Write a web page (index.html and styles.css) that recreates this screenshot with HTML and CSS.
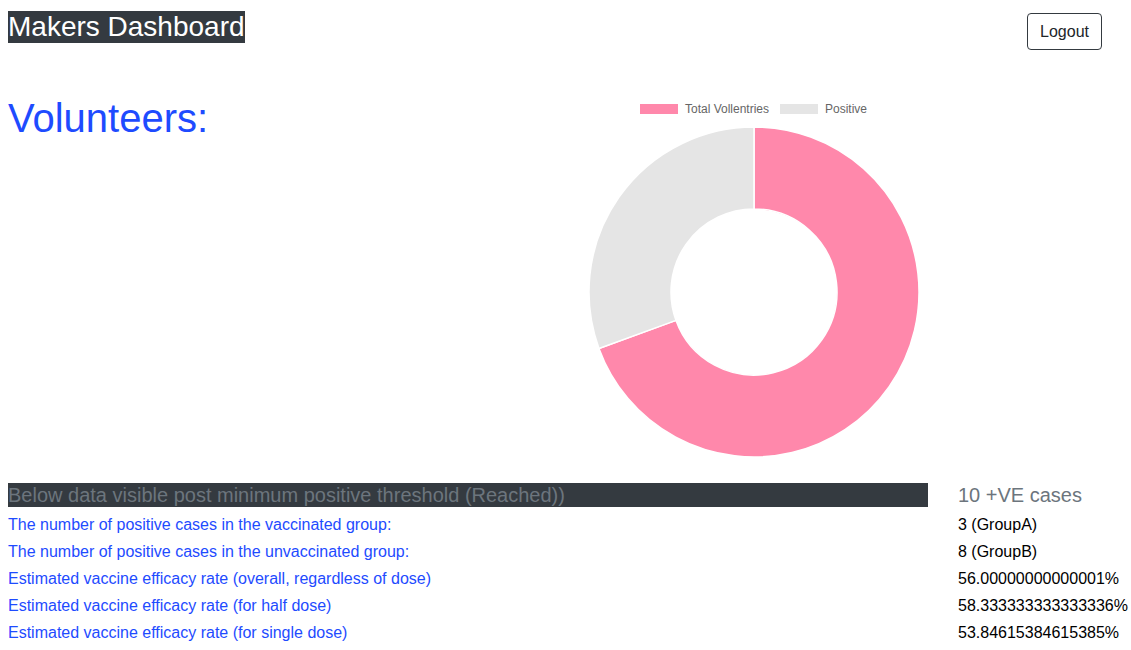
FILE: index.html
```html
<!DOCTYPE html>
<html lang="en">
<head>
<meta charset="utf-8">
<title>Makers Dashboard</title>
<link rel="stylesheet" href="styles.css">
</head>
<body>
<header class="topbar">
  <h3 class="brand">Makers Dashboard</h3>
  <button class="logout">Logout</button>
</header>

<section class="overview">
  <div class="left-col">
    <h1 class="volunteers">Volunteers:</h1>
  </div>
  <div class="chart-col">
    <div class="legend">
      <span class="legend-item"><span class="swatch swatch-pink"></span>Total Vollentries</span>
      <span class="legend-item"><span class="swatch swatch-grey"></span>Positive</span>
    </div>
    <svg class="donut" width="332" height="332" viewBox="0 0 332 332">
      <path class="seg-pink" d="M166,1 A165,165 0 1 1 10.95,222.43 L88.0,194.39 A83,83 0 1 0 166,83 Z"/>
      <path class="seg-grey" d="M10.95,222.43 A165,165 0 0 1 166,1 L166,83 A83,83 0 0 0 88.0,194.39 Z"/>
    </svg>
  </div>
</section>

<section class="stats">
  <div class="threshold">Below data visible post minimum positive threshold (Reached))</div>
  <div class="cases">10 +VE cases</div>

  <div class="label">The number of positive cases in the vaccinated group:</div>
  <div class="value">3 (GroupA)</div>

  <div class="label">The number of positive cases in the unvaccinated group:</div>
  <div class="value">8 (GroupB)</div>

  <div class="label">Estimated vaccine efficacy rate (overall, regardless of dose)</div>
  <div class="value">56.00000000000001%</div>

  <div class="label">Estimated vaccine efficacy rate (for half dose)</div>
  <div class="value">58.333333333333336%</div>

  <div class="label">Estimated vaccine efficacy rate (for single dose)</div>
  <div class="value">53.84615384615385%</div>
</section>
</body>
</html>
```

FILE: styles.css
```css
* { box-sizing: border-box; }

body {
  margin: 0;
  font-family: "Liberation Sans", Arial, sans-serif;
  font-size: 16px;
  color: #212529;
  background: #fff;
}

.topbar {
  display: flex;
  justify-content: space-between;
  align-items: flex-start;
  padding: 11px 29px 0 8px;
  height: 50px;
}

.brand {
  margin: 0;
  font-size: 28px;
  font-weight: 400;
  line-height: 32px;
  color: #fff;
  background: #343a40;
  padding: 0;
}

.logout {
  margin-top: 2px;
  font-family: inherit;
  font-size: 16px;
  line-height: 23px;
  padding: 6px 12px;
  color: #212529;
  background: #fff;
  border: 1px solid #343a40;
  border-radius: 4px;
}

.overview {
  display: grid;
  grid-template-columns: 376px 1fr;
  margin-top: 44px;
}

.left-col { padding-left: 8px; }

.volunteers {
  margin: 0;
  font-size: 40px;
  font-weight: 400;
  line-height: 48px;
  color: #1e4bff;
}

.chart-col {
  display: flex;
  flex-direction: column;
  align-items: center;
}

.legend {
  display: flex;
  gap: 11px;
  margin-top: 8px;
  height: 14px;
  font-size: 12px;
  line-height: 14px;
  color: #666;
}

.legend-item {
  display: flex;
  align-items: center;
  gap: 7px;
}

.swatch {
  display: inline-block;
  width: 38px;
  height: 10px;
}

.swatch-pink { background: #ff88ab; }
.swatch-grey { background: #e5e5e5; }

.donut {
  display: block;
  margin-top: 10px;
}

.seg-pink { fill: #ff88ab; stroke: #fff; stroke-width: 1.5; }
.seg-grey { fill: #e5e5e5; stroke: #fff; stroke-width: 1.5; }

.stats {
  display: grid;
  grid-template-columns: 920px 1fr;
  column-gap: 30px;
  padding-left: 8px;
  margin-top: 25px;
}

.threshold {
  background: #343a40;
  color: #6c757d;
  font-size: 20px;
  line-height: 24px;
  margin-bottom: 4px;
}

.cases {
  color: #6c757d;
  font-size: 20px;
  line-height: 24px;
}

.label {
  color: #1e4bff;
  line-height: 27px;
}

.value {
  color: #000;
  line-height: 27px;
}
```
